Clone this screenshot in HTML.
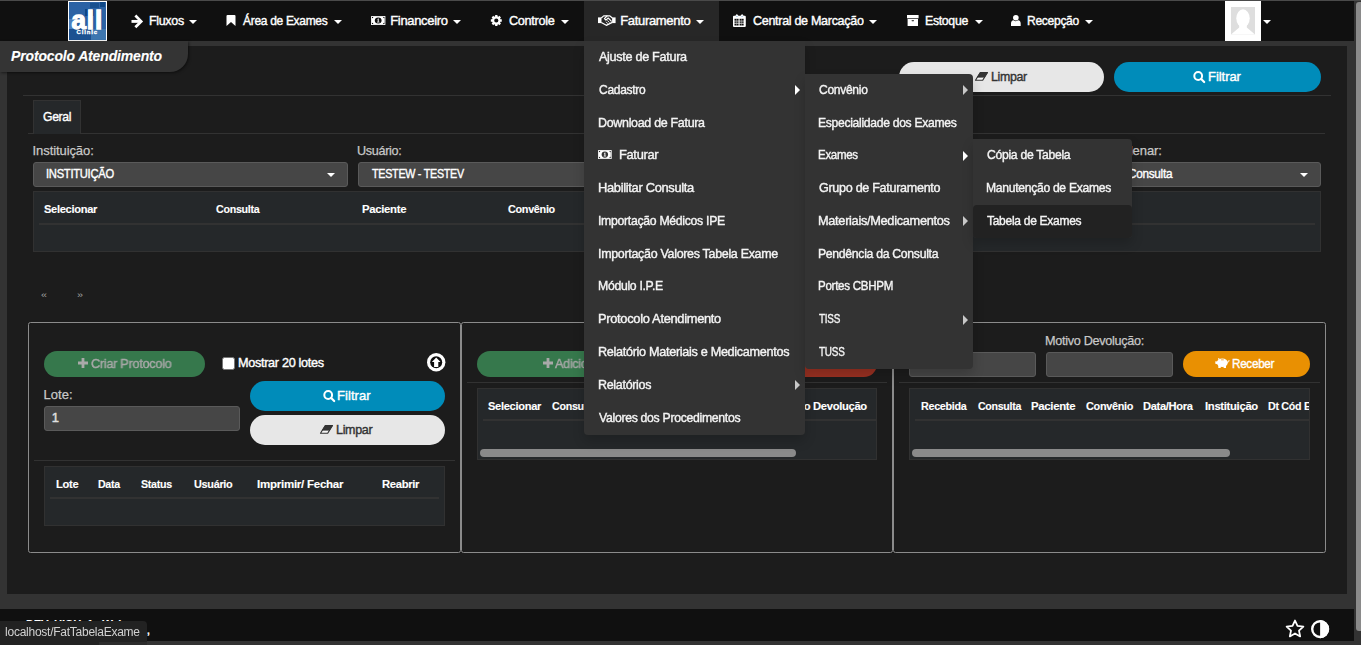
<!DOCTYPE html>
<html lang="pt-br">
<head>
<meta charset="utf-8">
<title>Protocolo Atendimento</title>
<style>
html,body{margin:0;padding:0}
body{width:1361px;height:645px;overflow:hidden;position:relative;background:#333;font-family:"Liberation Sans",sans-serif;color:#fff}
.a{position:absolute;box-sizing:border-box}
.t{position:absolute;white-space:nowrap;line-height:20px;height:20px;transform-origin:0 50%}
svg{position:absolute;overflow:visible}
.caret{position:absolute;width:0;height:0;border-left:4px solid transparent;border-right:4px solid transparent;border-top:4px solid #fff}
.arr{position:absolute;width:0;height:0;border-top:5px solid transparent;border-bottom:5px solid transparent;border-left:5.500px solid #c8c8c8}
.inp{background:#464646;border:1px solid #5a5a5a;border-radius:3px}
.tbl{background:#25282a;border:1px solid #313131}
.hr{background:#323232;height:1px}
.fs{border:1px solid #8b8b8b;border-radius:2.500px}
.btn{border-radius:15px}
.thumb{background:#8a8a8a;border-radius:4px;height:8px}
</style>
</head>
<body>
<!-- top line -->
<div class="a" style="left:0;top:0;width:1361px;height:1px;background:#4a4a4a"></div>
<!-- navbar -->
<div class="a" style="left:0;top:1px;width:1354px;height:40px;background:#101010"></div>
<div class="a" style="left:584px;top:1px;width:135px;height:40px;background:#272727"></div>
<!-- logo -->
<div class="a" id="logo" style="left:68px;top:1px;width:39px;height:40px;border:1px solid #fff;background:#2b62a4;overflow:hidden">
  <div class="a" style="left:0;top:27px;width:22px;height:12px;background:#1c5191"></div>
  <div class="a" style="left:22px;top:27px;width:15px;height:12px;background:#3d76af"></div>
  <div class="a" style="left:0;top:17px;width:4px;height:10px;background:#4a7fbd"></div>
  <div class="a" style="left:21px;top:1px;width:9px;height:5px;background:#17508f"></div>
  <div class="a" style="left:31px;top:0;width:5px;height:5px;background:#0f4887"></div>
  <div class="a" style="left:16px;top:7px;width:9px;height:7px;background:#0f4686"></div>
  <span class="t" style="left:2.5px;top:4px;font-size:26px;font-weight:700;line-height:28px;height:28px;-webkit-text-stroke:1.3px #fff;letter-spacing:0.9px;text-shadow:0 1px 1px rgba(0,0,40,.35)">all</span>
  <span class="t" style="left:7.600px;top:25.800px;font-size:6px;font-weight:700;line-height:8px;height:8px;letter-spacing:0.85px;-webkit-text-stroke:0.3px #fff">Clinic</span>
</div>
<!-- avatar -->
<div class="a" style="left:1225px;top:1px;width:36px;height:40px;background:#fff"></div>
<svg style="left:1231px;top:6.500px" width="24" height="27.500" viewBox="0 0 24 27.500"><rect width="24" height="27.500" fill="#dedede"/><ellipse cx="12" cy="11.300" rx="6.700" ry="9" fill="#fff"/><path d="M8.200,17 V20.600 L0,27.500 H24 L15.800,20.600 V17 Z" fill="#fff"/></svg>
<!-- carets -->
<div class="caret" style="left:189px;top:20px"></div>
<div class="caret" style="left:333.500px;top:20px"></div>
<div class="caret" style="left:453px;top:20px"></div>
<div class="caret" style="left:561px;top:20px"></div>
<div class="caret" style="left:696px;top:20px"></div>
<div class="caret" style="left:868.500px;top:20px"></div>
<div class="caret" style="left:974.500px;top:20px"></div>
<div class="caret" style="left:1084.500px;top:20px"></div>
<div class="caret" style="left:1262.500px;top:20px"></div>
<svg style="left:131px;top:15px" width="12" height="13" viewBox="0 0 12 13" ><path d="M0.5,6.4 H9.6" stroke="#fff" stroke-width="2.9" fill="none"/><path d="M5.3,1.5 L10.2,6.4 L5.3,11.3" stroke="#fff" stroke-width="2.7" stroke-linecap="square" stroke-linejoin="miter" fill="none"/></svg>
<svg style="left:226px;top:15px" width="10" height="11" viewBox="0 0 10 11" ><path d="M0.5,1 Q0.5,0 1.5,0 H8.5 Q9.5,0 9.5,1 V11 L5,7 L0.5,11 Z" fill="#fff"/></svg>
<svg style="left:370.7px;top:15.8px" width="14.4" height="9" viewBox="0 0 14.4 9" ><rect x="0" y="0" width="14.4" height="9" rx="0.6" fill="#fff"/><rect x="0.9" y="0.9" width="12.60" height="7.20" fill="#101010"/><path d="M2.3,0.9 H12.1 A1.4,1.4 0 0 0 13.5,2.3 V6.699999999999999 A1.4,1.4 0 0 0 12.1,8.1 H2.3 A1.4,1.4 0 0 0 0.9,6.699999999999999 V2.3 A1.4,1.4 0 0 0 2.3,0.9Z" fill="#fff"/><ellipse cx="7.2" cy="4.5" rx="3.38" ry="3.06" fill="#101010"/><path d="M6.1,3.4 L7.1000000000000005,2.5 H7.8 V5.8 H8.5 V6.5 H6.0 V5.8 H6.7 V3.6 Z" fill="#e8e8e8"/></svg>
<svg style="left:490px;top:14px" width="13" height="13" viewBox="0 0 13 13" ><path d="M11.78,5.36 L11.78,7.64 L10.43,7.70 L10.07,8.57 L10.98,9.57 L9.37,11.18 L8.37,10.27 L7.50,10.63 L7.44,11.98 L5.16,11.98 L5.10,10.63 L4.23,10.27 L3.23,11.18 L1.62,9.57 L2.53,8.57 L2.17,7.70 L0.82,7.64 L0.82,5.36 L2.17,5.30 L2.53,4.43 L1.62,3.43 L3.23,1.82 L4.23,2.73 L5.10,2.37 L5.16,1.02 L7.44,1.02 L7.50,2.37 L8.37,2.73 L9.37,1.82 L10.98,3.43 L10.07,4.43 L10.43,5.30Z M8.40,6.50 A2.1,2.1 0 1,0 4.20,6.50 A2.1,2.1 0 1,0 8.40,6.50Z" fill="#fff" fill-rule="evenodd"/></svg>
<svg style="left:597.6px;top:15.3px" width="17.6" height="11.4" viewBox="0 0 17.6 11.4" ><rect x="0" y="2.4" width="3.5" height="5.700" fill="#fff"/><rect x="14.100" y="2.400" width="3.500" height="5.700" fill="#fff"/><path d="M3.300,3 L5.700,0.900 H11.900 L14.300,3" fill="none" stroke="#fff" stroke-width="1.250" stroke-linejoin="round"/><path d="M3.300,7.500 L8.300,10.300 L14.300,7.400" fill="none" stroke="#fff" stroke-width="1.300" stroke-linejoin="round"/><path d="M9,1 L6.400,3.700 L7.900,5.200 L10.200,3 L13.300,6.100" fill="none" stroke="#fff" stroke-width="1.150" stroke-linejoin="round" stroke-linecap="round"/><path d="M11.200,7.300 L9.600,5.700 M9.700,8.500 L8.300,7.100" fill="none" stroke="#fff" stroke-width="0.900" stroke-linecap="round"/></svg>
<svg style="left:733.3px;top:14.3px" width="12.8" height="12.9" viewBox="0 0 12.8 12.9" ><path d="M0,2.700 Q0,1.800 0.900,1.800 H2.300 L3.900,0 L5.500,1.800 H7.500 L9.100,0 L10.700,1.800 H11.900 Q12.800,1.800 12.800,2.700 V12 Q12.800,12.900 11.900,12.900 H0.900 Q0,12.900 0,12 Z" fill="#fff"/><rect x="1.50" y="4.80" width="1.95" height="1.9" fill="#101010"/><rect x="3.60" y="4.80" width="1.95" height="1.9" fill="#101010"/><rect x="6.60" y="4.80" width="1.95" height="1.9" fill="#101010"/><rect x="8.70" y="4.80" width="1.95" height="1.9" fill="#101010"/><rect x="1.50" y="7.40" width="1.95" height="1.4" fill="#101010"/><rect x="3.60" y="7.40" width="1.95" height="1.4" fill="#101010"/><rect x="6.60" y="7.40" width="1.95" height="1.4" fill="#101010"/><rect x="8.70" y="7.40" width="1.95" height="1.4" fill="#101010"/><rect x="1.50" y="9.60" width="1.95" height="1.9" fill="#101010"/><rect x="3.60" y="9.60" width="1.95" height="1.9" fill="#101010"/><rect x="6.60" y="9.60" width="1.95" height="1.9" fill="#101010"/><rect x="8.70" y="9.60" width="1.95" height="1.9" fill="#101010"/><circle cx="3.900" cy="2.400" r="0.700" fill="#9cc4e8"/><circle cx="9.100" cy="2.400" r="0.700" fill="#9cc4e8"/></svg>
<svg style="left:906.5px;top:15px" width="11.6" height="11" viewBox="0 0 11.6 11" ><rect x="0" y="0" width="11.6" height="3.3" fill="#fff"/><rect x="0.6" y="4" width="10.4" height="7" fill="#fff"/><rect x="4.6" y="5.2" width="2.4" height="1" rx="0.4" fill="#101010"/></svg>
<svg style="left:1011px;top:15px" width="9.7" height="11" viewBox="0 0 9.7 11" ><circle cx="4.85" cy="2.8" r="2.8" fill="#fff"/><path d="M0,11 V8.6 Q0,5.600 2.6,5.300 Q4.85,7 7.100,5.300 Q9.700,5.600 9.700,8.600 V11 Z" fill="#fff"/></svg>

<!-- content panel -->
<div class="a" style="left:7px;top:46px;width:1340px;height:548px;background:#1c1c1c"></div>
<!-- title tab -->
<div class="a" style="left:0;top:41px;width:188px;height:31px;background:#343434;border-bottom-right-radius:18px;box-shadow:1px 1px 3px rgba(0,0,0,.5)"></div>
<!-- hr + tabs -->
<div class="a hr" style="left:23px;top:95px;width:1308px"></div>
<div class="a hr" style="left:28px;top:133px;width:1297px"></div>
<div class="a" style="left:33px;top:100px;width:48px;height:34px;background:#25282a;border:1px solid #323232;border-bottom:none"></div>
<!-- top buttons -->
<div class="a btn" style="left:899px;top:62px;width:205px;height:30px;background:#e7e7e7"></div>
<div class="a btn" style="left:1114px;top:62px;width:207px;height:30px;background:#008cba"></div>
<!-- selects -->
<div class="a inp" style="left:33px;top:162px;width:315px;height:25px"></div>
<div class="a inp" style="left:358px;top:162px;width:315px;height:25px"></div>
<div class="a inp" style="left:683px;top:162px;width:315px;height:25px"></div>
<div class="a inp" style="left:1095px;top:162px;width:226px;height:25px"></div>
<div class="caret" style="left:326.700px;top:173px"></div>
<div class="caret" style="left:1299.500px;top:173px"></div>
<!-- main table -->
<div class="a tbl" style="left:33px;top:191px;width:1288px;height:61px"></div>
<div class="a" style="left:39px;top:223px;width:1276px;height:2px;background:#323232"></div>

<!-- fieldsets -->
<div class="a fs" style="left:28px;top:322px;width:433px;height:231px"></div>
<div class="a fs" style="left:461px;top:322px;width:432px;height:231px"></div>
<div class="a fs" style="left:893px;top:322px;width:433px;height:231px"></div>

<!-- panel 1 -->
<div class="a btn" style="left:44px;top:351px;width:161px;height:26px;background:#36784c;border-radius:13px"></div>
<div class="a" style="left:222px;top:357px;width:13px;height:13px;background:#fff;border:1px solid #767676;border-radius:2.500px"></div>
<div class="a inp" style="left:44px;top:406px;width:196px;height:25px"></div>
<div class="a btn" style="left:250px;top:381px;width:195px;height:30px;background:#008cba"></div>
<div class="a btn" style="left:250px;top:415px;width:195px;height:30px;background:#e7e7e7"></div>
<div class="a hr" style="left:34px;top:460px;width:421px"></div>
<div class="a tbl" style="left:44px;top:466px;width:401px;height:60px"></div>
<div class="a" style="left:50px;top:497px;width:389px;height:2px;background:#323232"></div>

<!-- panel 2 -->
<div class="a btn" style="left:477px;top:351px;width:195px;height:26px;background:#36784c;border-radius:13px"></div>
<div class="a btn" style="left:682px;top:351px;width:195px;height:26px;background:#9b3122;border-radius:13px"></div>
<div class="a hr" style="left:467px;top:382px;width:420px"></div>
<div class="a tbl" style="left:477px;top:388px;width:400px;height:72px"></div>
<div class="a" style="left:483px;top:419px;width:393px;height:2px;background:#323232"></div>
<div class="a thumb" style="left:480px;top:449px;width:316px"></div>

<!-- panel 3 -->
<div class="a inp" style="left:909px;top:352px;width:127px;height:25px"></div>
<div class="a inp" style="left:1046px;top:352px;width:127px;height:25px"></div>
<div class="a btn" style="left:1183px;top:351px;width:127px;height:26px;background:#e99002;border-radius:13px"></div>
<div class="a hr" style="left:899px;top:382px;width:421px"></div>
<div class="a tbl" style="left:909px;top:388px;width:401px;height:72px"></div>
<div class="a" style="left:915px;top:419px;width:394px;height:2px;background:#323232"></div>
<div class="a thumb" style="left:912px;top:449px;width:318px"></div>
<div class="a" id="p3h" style="left:910px;top:389px;width:399px;height:30px;overflow:hidden">
<span class="t" style="left:10.6px;top:7.0px;font-size:11.5px;font-weight:700;letter-spacing:-0.320px;-webkit-text-stroke:0.12px;transform:scaleX(0.937);">Recebida</span>
<span class="t" style="left:67.6px;top:7.0px;font-size:11.5px;font-weight:700;letter-spacing:-0.320px;-webkit-text-stroke:0.12px;transform:scaleX(0.923);">Consulta</span>
<span class="t" style="left:121.4px;top:7.0px;font-size:11.5px;font-weight:700;letter-spacing:-0.320px;-webkit-text-stroke:0.12px;transform:scaleX(0.989);">Paciente</span>
<span class="t" style="left:175.8px;top:7.0px;font-size:11.5px;font-weight:700;letter-spacing:-0.320px;-webkit-text-stroke:0.12px;transform:scaleX(0.947);">Convênio</span>
<span class="t" style="left:233.4px;top:7.0px;font-size:11.5px;font-weight:700;letter-spacing:-0.320px;-webkit-text-stroke:0.12px;transform:scaleX(0.966);">Data/Hora</span>
<span class="t" style="left:294.8px;top:7.0px;font-size:11.5px;font-weight:700;letter-spacing:-0.320px;-webkit-text-stroke:0.12px;transform:scaleX(0.980);">Instituição</span>
<span class="t" style="left:358.1px;top:7.0px;font-size:11.5px;font-weight:700;letter-spacing:-0.320px;-webkit-text-stroke:0.12px;transform:scaleX(0.930);">Dt Cód Exame</span>
</div>

<!-- footer -->
<div class="a" style="left:0;top:609px;width:1354px;height:32px;background:#101010;overflow:hidden">
<span class="t" style="left:26.1px;top:6.0px;font-size:12px;font-weight:700;letter-spacing:-0.320px;-webkit-text-stroke:0.12px;transform:scaleX(0.942);">DEV: HIGH_1 - Web</span>
<span class="t" style="left:146.8px;top:11.0px;font-size:12px;-webkit-text-stroke:0.4px;">,</span>
</div>
<!-- page scrollbar thumb -->
<div class="a" style="left:1356px;top:2px;width:6px;height:629px;background:#8a8a8a;border-radius:3px 0 0 3px"></div>

<svg style="left:974.5px;top:72px" width="13" height="8.8" viewBox="0 0 13 8.8" ><path d="M5.300,0.500 H12.500 L7.700,8.300 H0.500 Z" fill="#f6f6f6" stroke="#333" stroke-width="1.150" stroke-linejoin="round"/><path d="M5.300,0.500 H12.500 L9.500,5.300 H2.300 Z" fill="#333" stroke="#333" stroke-width="0.600" stroke-linejoin="round"/></svg>
<svg style="left:1192.9px;top:71.1px" width="12.2" height="12" viewBox="0 0 12.2 12" ><circle cx="5.2" cy="5" r="3.900" fill="none" stroke="#fff" stroke-width="2"/><path d="M8.2,8 L11.2,11" stroke="#fff" stroke-width="2.2" stroke-linecap="round"/></svg>
<svg style="left:77.8px;top:358.4px" width="10" height="10" viewBox="0 0 10 10" ><path d="M3.6,0 h2.8 v3.600 h3.600 v2.800 h-3.600 v3.600 h-2.800 v-3.600 h-3.600 v-2.800 h3.600 z" fill="#a9a9a9"/></svg>
<svg style="left:322.7px;top:390.2px" width="12.2" height="12" viewBox="0 0 12.2 12" ><circle cx="5.2" cy="5" r="3.900" fill="none" stroke="#fff" stroke-width="2"/><path d="M8.2,8 L11.2,11" stroke="#fff" stroke-width="2.2" stroke-linecap="round"/></svg>
<svg style="left:320.4px;top:425.3px" width="13" height="8.8" viewBox="0 0 13 8.8" ><path d="M5.300,0.500 H12.500 L7.700,8.300 H0.500 Z" fill="#f6f6f6" stroke="#333" stroke-width="1.150" stroke-linejoin="round"/><path d="M5.300,0.500 H12.500 L9.500,5.300 H2.300 Z" fill="#333" stroke="#333" stroke-width="0.600" stroke-linejoin="round"/></svg>
<svg style="left:542.6px;top:358.4px" width="10" height="10" viewBox="0 0 10 10" ><path d="M3.6,0 h2.8 v3.600 h3.600 v2.800 h-3.600 v3.600 h-2.800 v-3.600 h-3.600 v-2.800 h3.600 z" fill="#a9a9a9"/></svg>
<svg style="left:426.9px;top:352.6px" width="18.4" height="18.4" viewBox="0 0 18.4 18.4" ><circle cx="9.2" cy="9.200" r="9.2" fill="#fff"/><circle cx="9.200" cy="9.200" r="6" fill="#0c0c0c"/><path d="M9.200,4.400 L13.500,8.900 H11.300 V14 H7.100 V8.900 H4.900 Z" fill="#fff"/></svg>
<svg style="left:1215px;top:358px" width="15" height="10" viewBox="0 0 15 10" ><ellipse cx="7.300" cy="4.700" rx="5.500" ry="4.200" fill="#fff"/><path d="M2.500,3.600 L0.300,3.300 L0.300,5.700 L2.300,6.200 Z" fill="#fff"/><path d="M3,1.800 L3.200,0 L5.600,1.200 Z" fill="#fff"/><rect x="3.300" y="7" width="2.400" height="3" fill="#fff"/><rect x="8.600" y="7" width="2.400" height="3" fill="#fff"/><path d="M12.300,4.400 Q14.300,4.400 14.100,2.400" stroke="#fff" stroke-width="0.9" fill="none" stroke-linecap="round"/><rect x="6" y="1.500" width="2.800" height="0.700" rx="0.300" fill="#e99002"/></svg>
<svg style="left:1284.6px;top:618.6px" width="20" height="19" viewBox="0 0 20 19" ><path d="M10.00,1.50 L12.47,6.90 L18.37,7.58 L13.99,11.60 L15.17,17.42 L10.00,14.50 L4.83,17.42 L6.01,11.60 L1.63,7.58 L7.53,6.90Z" fill="none" stroke="#fff" stroke-width="1.800" stroke-linejoin="round"/></svg>
<svg style="left:1311.2px;top:619.9px" width="18.2" height="18.2" viewBox="0 0 18.2 18.2" ><circle cx="9.100" cy="9.100" r="7.900" fill="#101010" stroke="#fff" stroke-width="2.400"/><path d="M9.100,0 A9.100,9.100 0 0 1 9.100,18.200 Z" fill="#fff"/></svg>

<span class="t" style="left:148.7px;top:10.5px;font-size:13px;letter-spacing:-0.320px;-webkit-text-stroke:0.4px;transform:scaleX(0.957);">Fluxos</span>
<span class="t" style="left:243.2px;top:10.5px;font-size:13px;letter-spacing:-0.320px;-webkit-text-stroke:0.4px;transform:scaleX(0.921);">Área de Exames</span>
<span class="t" style="left:390.2px;top:10.5px;font-size:13px;letter-spacing:-0.318px;-webkit-text-stroke:0.4px;">Financeiro</span>
<span class="t" style="left:509.2px;top:10.5px;font-size:13px;letter-spacing:-0.320px;-webkit-text-stroke:0.4px;transform:scaleX(0.977);">Controle</span>
<span class="t" style="left:620.2px;top:10.5px;font-size:13px;letter-spacing:-0.320px;-webkit-text-stroke:0.4px;">Faturamento</span>
<span class="t" style="left:752.7px;top:10.5px;font-size:13px;letter-spacing:-0.320px;-webkit-text-stroke:0.4px;transform:scaleX(0.965);">Central de Marcação</span>
<span class="t" style="left:925.2px;top:10.5px;font-size:13px;letter-spacing:-0.320px;-webkit-text-stroke:0.4px;transform:scaleX(0.945);">Estoque</span>
<span class="t" style="left:1026.8px;top:10.5px;font-size:13px;letter-spacing:-0.320px;-webkit-text-stroke:0.4px;transform:scaleX(0.928);">Recepção</span>
<span class="t" style="left:11.1px;top:46.0px;font-size:14px;font-weight:700;font-style:italic;letter-spacing:-0.162px;-webkit-text-stroke:0.12px;">Protocolo Atendimento</span>
<span class="t" style="left:42.8px;top:106.5px;font-size:13px;letter-spacing:-0.320px;-webkit-text-stroke:0.4px;transform:scaleX(0.935);">Geral</span>
<span class="t" style="left:32.6px;top:140.5px;font-size:13px;letter-spacing:-0.089px;-webkit-text-stroke:0.25px;color:#c8c8c8;">Instituição:</span>
<span class="t" style="left:357.2px;top:140.5px;font-size:13px;letter-spacing:-0.320px;-webkit-text-stroke:0.25px;transform:scaleX(0.971);color:#c8c8c8;">Usuário:</span>
<span class="t" style="left:1111.1px;top:140.5px;font-size:13px;letter-spacing:-0.063px;-webkit-text-stroke:0.25px;color:#c8c8c8;">Ordenar:</span>
<span class="t" style="left:45.8px;top:163.5px;font-size:13px;letter-spacing:-0.320px;-webkit-text-stroke:0.4px;transform:scaleX(0.861);">INSTITUIÇÃO</span>
<span class="t" style="left:371.8px;top:163.5px;font-size:13px;letter-spacing:-0.320px;-webkit-text-stroke:0.4px;transform:scaleX(0.826);">TESTEW - TESTEV</span>
<span class="t" style="left:1128.2px;top:163.5px;font-size:13px;letter-spacing:-0.320px;-webkit-text-stroke:0.4px;transform:scaleX(0.906);">Consulta</span>
<span class="t" style="left:44.3px;top:199.0px;font-size:11.5px;font-weight:700;letter-spacing:-0.320px;-webkit-text-stroke:0.12px;transform:scaleX(0.965);">Selecionar</span>
<span class="t" style="left:216.1px;top:199.0px;font-size:11.5px;font-weight:700;letter-spacing:-0.320px;-webkit-text-stroke:0.12px;transform:scaleX(0.929);">Consulta</span>
<span class="t" style="left:361.9px;top:199.0px;font-size:11.5px;font-weight:700;letter-spacing:-0.320px;-webkit-text-stroke:0.12px;transform:scaleX(0.987);">Paciente</span>
<span class="t" style="left:508.1px;top:199.0px;font-size:11.5px;font-weight:700;letter-spacing:-0.320px;-webkit-text-stroke:0.12px;transform:scaleX(0.941);">Convênio</span>
<span class="t" style="left:40.8px;top:285.0px;font-size:9px;transform:scaleX(1.200);color:#a0a0a0;">«</span>
<span class="t" style="left:77.3px;top:285.0px;font-size:9px;transform:scaleX(1.200);color:#a0a0a0;">»</span>
<span class="t" style="left:990.7px;top:66.5px;font-size:13px;letter-spacing:-0.320px;-webkit-text-stroke:0.4px;transform:scaleX(0.950);color:#333;">Limpar</span>
<span class="t" style="left:1208.0px;top:66.5px;font-size:13px;letter-spacing:-0.048px;-webkit-text-stroke:0.4px;">Filtrar</span>
<span class="t" style="left:91.2px;top:353.5px;font-size:13px;letter-spacing:-0.320px;-webkit-text-stroke:0.4px;transform:scaleX(0.982);color:#a8a8a8;will-change:transform;">Criar Protocolo</span>
<span class="t" style="left:238.4px;top:352.5px;font-size:13px;letter-spacing:-0.320px;-webkit-text-stroke:0.4px;transform:scaleX(0.974);">Mostrar 20 lotes</span>
<span class="t" style="left:43.6px;top:384.5px;font-size:13px;letter-spacing:0.012px;-webkit-text-stroke:0.25px;color:#c8c8c8;">Lote:</span>
<span class="t" style="left:51.7px;top:407.5px;font-size:13px;-webkit-text-stroke:0.4px;color:#e0e0e0;">1</span>
<span class="t" style="left:337.1px;top:385.5px;font-size:13px;letter-spacing:0.035px;-webkit-text-stroke:0.4px;">Filtrar</span>
<span class="t" style="left:336.2px;top:419.5px;font-size:13px;letter-spacing:-0.320px;-webkit-text-stroke:0.4px;transform:scaleX(0.961);color:#333;">Limpar</span>
<span class="t" style="left:55.8px;top:474.0px;font-size:11.5px;font-weight:700;letter-spacing:-0.320px;-webkit-text-stroke:0.12px;transform:scaleX(0.968);">Lote</span>
<span class="t" style="left:98.4px;top:474.0px;font-size:11.5px;font-weight:700;letter-spacing:-0.320px;-webkit-text-stroke:0.12px;transform:scaleX(0.923);">Data</span>
<span class="t" style="left:141.1px;top:474.0px;font-size:11.5px;font-weight:700;letter-spacing:-0.320px;-webkit-text-stroke:0.12px;transform:scaleX(0.929);">Status</span>
<span class="t" style="left:194.3px;top:474.0px;font-size:11.5px;font-weight:700;letter-spacing:-0.320px;-webkit-text-stroke:0.12px;transform:scaleX(0.947);">Usuário</span>
<span class="t" style="left:257.1px;top:474.0px;font-size:11.5px;font-weight:700;letter-spacing:-0.251px;-webkit-text-stroke:0.12px;">Imprimir/ Fechar</span>
<span class="t" style="left:382.1px;top:474.0px;font-size:11.5px;font-weight:700;letter-spacing:-0.320px;-webkit-text-stroke:0.12px;transform:scaleX(0.975);">Reabrir</span>
<span class="t" style="left:555.4px;top:353.5px;font-size:13px;letter-spacing:-0.320px;-webkit-text-stroke:0.4px;transform:scaleX(0.973);color:#a8a8a8;will-change:transform;">Adicionar</span>
<span class="t" style="left:487.8px;top:396.0px;font-size:11.5px;font-weight:700;letter-spacing:-0.320px;-webkit-text-stroke:0.12px;transform:scaleX(0.964);">Selecionar</span>
<span class="t" style="left:551.6px;top:396.0px;font-size:11.5px;font-weight:700;letter-spacing:-0.320px;-webkit-text-stroke:0.12px;transform:scaleX(0.929);">Consulta</span>
<span class="t" style="left:776.1px;top:396.0px;font-size:11.5px;font-weight:700;letter-spacing:-0.320px;-webkit-text-stroke:0.12px;transform:scaleX(0.974);">Motivo Devolução</span>
<span class="t" style="left:1044.9px;top:330.5px;font-size:13px;letter-spacing:-0.320px;-webkit-text-stroke:0.25px;transform:scaleX(0.974);color:#c8c8c8;">Motivo Devolução:</span>
<span class="t" style="left:1232.4px;top:353.5px;font-size:13px;letter-spacing:-0.320px;-webkit-text-stroke:0.4px;transform:scaleX(0.899);">Receber</span>

<!-- ===== MENUS ===== -->
<div class="a" id="menus" style="left:0;top:0;width:1361px;height:645px;z-index:40;will-change:transform;pointer-events:none">
<div class="a" style="left:584px;top:41px;width:221px;height:393.600px;background:#333;border-radius:0 0 4px 4px;box-shadow:0 6px 12px rgba(0,0,0,.18);z-index:40"></div>
<div class="a" style="left:805px;top:73.800px;width:168px;height:295.200px;background:#333;border-radius:0 4px 4px 4px;box-shadow:0 6px 12px rgba(0,0,0,.18);z-index:41"></div>
<div class="a" style="left:973px;top:139.400px;width:158.500px;height:98.400px;background:#333;border-radius:0 4px 4px 4px;box-shadow:0 6px 12px rgba(0,0,0,.18);z-index:42"></div>
<div class="a" style="left:973px;top:205px;width:158.500px;height:32.800px;background:#222;border-radius:4px;z-index:43"></div>
<!-- menu arrows -->
<div class="arr" style="left:795px;top:85px;z-index:50;border-left-color:#fff"></div>
<div class="arr" style="left:795px;top:380.200px;z-index:50"></div>
<div class="arr" style="left:963px;top:85px;z-index:50"></div>
<div class="arr" style="left:963px;top:150.600px;z-index:50;border-left-color:#fff"></div>
<div class="arr" style="left:963px;top:216.200px;z-index:50"></div>
<div class="arr" style="left:963px;top:314.600px;z-index:50"></div>
<svg style="left:598.3px;top:149.9px;z-index:50" width="13.7" height="9.1" viewBox="0 0 13.7 9.1" ><rect x="0" y="0" width="13.7" height="9.1" rx="0.6" fill="#fff"/><rect x="0.9" y="0.9" width="11.90" height="7.30" fill="#333"/><path d="M2.3,0.9 H11.399999999999999 A1.4,1.4 0 0 0 12.799999999999999,2.3 V6.799999999999999 A1.4,1.4 0 0 0 11.399999999999999,8.2 H2.3 A1.4,1.4 0 0 0 0.9,6.799999999999999 V2.3 A1.4,1.4 0 0 0 2.3,0.9Z" fill="#fff"/><ellipse cx="6.85" cy="4.55" rx="3.22" ry="3.09" fill="#333"/><path d="M5.75,3.4499999999999997 L6.75,2.55 H7.449999999999999 V5.85 H8.15 V6.55 H5.6499999999999995 V5.85 H6.35 V3.65 Z" fill="#e8e8e8"/></svg>
<span class="t" style="left:599.0px;top:46.5px;font-size:13px;letter-spacing:-0.320px;-webkit-text-stroke:0.4px;transform:scaleX(0.972);color:#f4f4f4;z-index:50;">Ajuste de Fatura</span>
<span class="t" style="left:599.0px;top:79.5px;font-size:13px;letter-spacing:-0.320px;-webkit-text-stroke:0.4px;transform:scaleX(0.925);color:#f4f4f4;z-index:50;">Cadastro</span>
<span class="t" style="left:598.0px;top:112.5px;font-size:13px;letter-spacing:-0.320px;-webkit-text-stroke:0.4px;transform:scaleX(0.959);color:#f4f4f4;z-index:50;">Download de Fatura</span>
<span class="t" style="left:619.0px;top:144.5px;font-size:13px;letter-spacing:-0.320px;-webkit-text-stroke:0.4px;transform:scaleX(0.989);color:#f4f4f4;z-index:50;">Faturar</span>
<span class="t" style="left:598.0px;top:177.5px;font-size:13px;letter-spacing:-0.320px;-webkit-text-stroke:0.4px;transform:scaleX(0.991);color:#f4f4f4;z-index:50;">Habilitar Consulta</span>
<span class="t" style="left:598.0px;top:210.5px;font-size:13px;letter-spacing:-0.320px;-webkit-text-stroke:0.4px;transform:scaleX(0.943);color:#f4f4f4;z-index:50;">Importação Médicos IPE</span>
<span class="t" style="left:598.0px;top:243.5px;font-size:13px;letter-spacing:-0.320px;-webkit-text-stroke:0.4px;transform:scaleX(0.959);color:#f4f4f4;z-index:50;">Importação Valores Tabela Exame</span>
<span class="t" style="left:598.0px;top:275.5px;font-size:13px;letter-spacing:-0.320px;-webkit-text-stroke:0.4px;transform:scaleX(0.941);color:#f4f4f4;z-index:50;">Módulo I.P.E</span>
<span class="t" style="left:598.0px;top:308.5px;font-size:13px;letter-spacing:-0.320px;-webkit-text-stroke:0.4px;transform:scaleX(0.991);color:#f4f4f4;z-index:50;">Protocolo Atendimento</span>
<span class="t" style="left:598.0px;top:341.5px;font-size:13px;letter-spacing:-0.320px;-webkit-text-stroke:0.4px;transform:scaleX(0.973);color:#f4f4f4;z-index:50;">Relatório Materiais e Medicamentos</span>
<span class="t" style="left:598.0px;top:374.5px;font-size:13px;letter-spacing:-0.320px;-webkit-text-stroke:0.4px;transform:scaleX(0.961);color:#f4f4f4;z-index:50;">Relatórios</span>
<span class="t" style="left:599.0px;top:407.5px;font-size:13px;letter-spacing:-0.320px;-webkit-text-stroke:0.4px;transform:scaleX(0.942);color:#f4f4f4;z-index:50;">Valores dos Procedimentos</span>
<span class="t" style="left:819.2px;top:79.5px;font-size:13px;letter-spacing:-0.320px;-webkit-text-stroke:0.4px;transform:scaleX(0.927);color:#f4f4f4;z-index:50;">Convênio</span>
<span class="t" style="left:818.3px;top:112.5px;font-size:13px;letter-spacing:-0.320px;-webkit-text-stroke:0.4px;transform:scaleX(0.933);color:#f4f4f4;z-index:50;">Especialidade dos Exames</span>
<span class="t" style="left:818.3px;top:144.5px;font-size:13px;letter-spacing:-0.320px;-webkit-text-stroke:0.4px;transform:scaleX(0.884);color:#f4f4f4;z-index:50;">Exames</span>
<span class="t" style="left:819.2px;top:177.5px;font-size:13px;letter-spacing:-0.320px;-webkit-text-stroke:0.4px;transform:scaleX(0.969);color:#f4f4f4;z-index:50;">Grupo de Faturamento</span>
<span class="t" style="left:818.2px;top:210.5px;font-size:13px;letter-spacing:-0.320px;-webkit-text-stroke:0.4px;transform:scaleX(0.983);color:#f4f4f4;z-index:50;">Materiais/Medicamentos</span>
<span class="t" style="left:818.2px;top:243.5px;font-size:13px;letter-spacing:-0.320px;-webkit-text-stroke:0.4px;transform:scaleX(0.941);color:#f4f4f4;z-index:50;">Pendência da Consulta</span>
<span class="t" style="left:818.3px;top:275.5px;font-size:13px;letter-spacing:-0.320px;-webkit-text-stroke:0.4px;transform:scaleX(0.890);color:#f4f4f4;z-index:50;">Portes CBHPM</span>
<span class="t" style="left:819.2px;top:308.5px;font-size:13px;letter-spacing:-0.320px;-webkit-text-stroke:0.4px;transform:scaleX(0.764);color:#f4f4f4;z-index:50;">TISS</span>
<span class="t" style="left:819.2px;top:341.5px;font-size:13px;letter-spacing:-0.320px;-webkit-text-stroke:0.4px;transform:scaleX(0.764);color:#f4f4f4;z-index:50;">TUSS</span>
<span class="t" style="left:986.8px;top:144.5px;font-size:13px;letter-spacing:-0.320px;-webkit-text-stroke:0.4px;transform:scaleX(0.937);color:#f4f4f4;z-index:50;">Cópia de Tabela</span>
<span class="t" style="left:985.9px;top:177.5px;font-size:13px;letter-spacing:-0.320px;-webkit-text-stroke:0.4px;transform:scaleX(0.934);color:#f4f4f4;z-index:50;">Manutenção de Exames</span>
<span class="t" style="left:986.8px;top:210.5px;font-size:13px;letter-spacing:-0.320px;-webkit-text-stroke:0.4px;transform:scaleX(0.926);color:#f4f4f4;z-index:50;">Tabela de Exames</span>
</div>
<!-- status tooltip -->
<div class="a" style="left:0;top:621px;width:147px;height:24px;background:#222;border-top-right-radius:4px;z-index:59"></div>
<div class="a" style="left:99px;top:642px;width:48px;height:3px;background:#2c2c2c;z-index:59"></div>
<span class="t" style="left:5.1px;top:622.0px;font-size:12px;letter-spacing:-0.255px;color:#d2d2d2;z-index:60;">localhost/FatTabelaExame</span>
</body>
</html>
